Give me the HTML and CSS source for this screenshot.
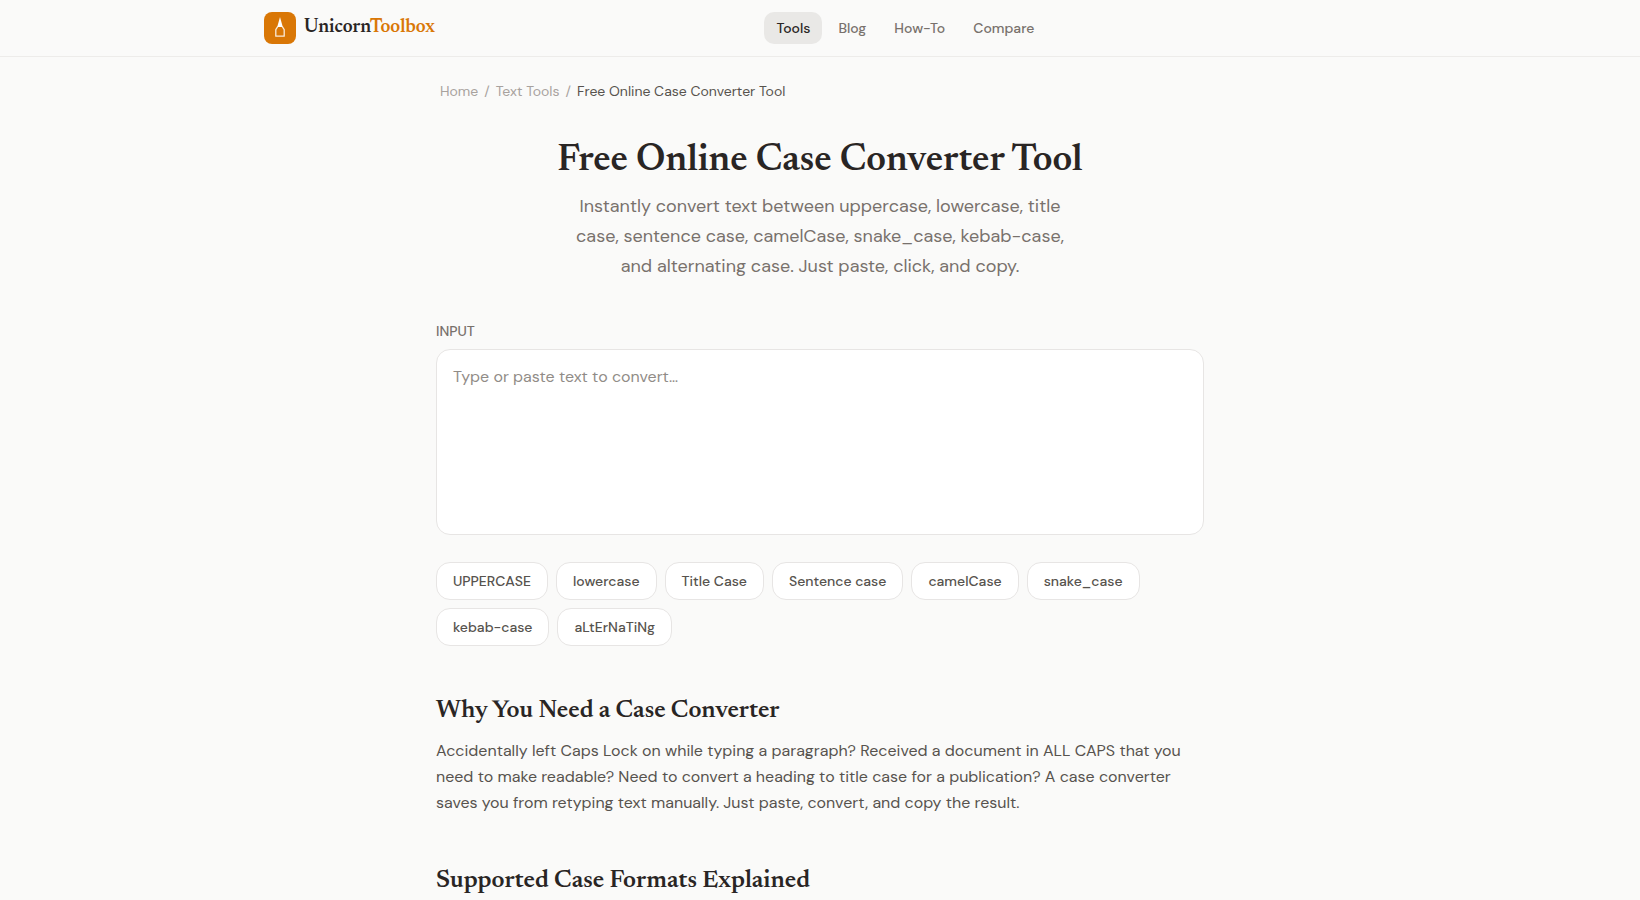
FILE: index.html
```html
<!DOCTYPE html>
<html lang="en">
	<head>
		<meta charset="UTF-8" />
		<meta name="viewport" content="width=device-width, initial-scale=1.0" />
		<title>Free Online Case Converter Tool</title>
		<link rel="stylesheet" href="styles.css">
	</head>
	<body>
		<header class="site-header">
			<div class="header-inner">
				<a class="logo" href="#">
					<svg class="logo-icon" viewBox="0 0 32 32" aria-hidden="true">
						<rect width="32" height="32" rx="8" fill="#d97706" />
						<path d="M16 5L18.8 15H13.2Z" fill="#fff" />
						<path d="M13.7 14.6L11.8 17.6V24.2H20.2V17.6L18.3 14.6" fill="none" stroke="#fff" stroke-opacity="0.85" stroke-width="1.3" stroke-linejoin="round" />
					</svg>
					<span>Unicorn<span class="logo-accent">Toolbox</span></span>
				</a>
				<nav class="main-nav">
					<a class="active" href="#">Tools</a>
					<a href="#">Blog</a>
					<a href="#">How-To</a>
					<a href="#">Compare</a>
				</nav>
				<div class="header-actions"></div>
			</div>
		</header>

		<main>
			<nav class="breadcrumb" aria-label="Breadcrumb">
				<a href="#">Home</a>
				<span>/</span>
				<a href="#">Text Tools</a>
				<span>/</span>
				<span class="current">Free Online Case Converter Tool</span>
			</nav>

			<div class="hero">
				<h1>Free Online Case Converter Tool</h1>
				<p>Instantly convert text between uppercase, lowercase, title case, sentence case, camelCase, snake_case, kebab-case, and alternating case. Just paste, click, and copy.</p>
			</div>

			<label for="caseInput">Input</label>
			<textarea id="caseInput" placeholder="Type or paste text to convert…"></textarea>

			<div class="case-buttons">
				<button type="button" data-case="upper">UPPERCASE</button>
				<button type="button" data-case="lower">lowercase</button>
				<button type="button" data-case="title">Title Case</button>
				<button type="button" data-case="sentence">Sentence case</button>
				<button type="button" data-case="camel">camelCase</button>
				<button type="button" data-case="snake">snake_case</button>
				<button type="button" data-case="kebab">kebab-case</button>
				<button type="button" data-case="alternating">aLtErNaTiNg</button>
			</div>

			<section>
				<h2>Why You Need a Case Converter</h2>
				<p>Accidentally left Caps Lock on while typing a paragraph? Received a document in ALL CAPS that you need to make readable? Need to convert a heading to title case for a publication? A case converter saves you from retyping text manually. Just paste, convert, and copy the result.</p>
			</section>

			<section>
				<h2>Supported Case Formats Explained</h2>
			</section>
		</main>
	</body>
</html>
```
FILE: styles.css
```css
* {
	box-sizing: border-box;
}
body {
	margin: 0;
	font-family: "DM Sans", "Noto Sans", sans-serif;
	font-size: 16px;
	line-height: 26px;
	color: #57534e;
	background-color: #fafaf9;
}
a {
	color: inherit;
	text-decoration: none;
}
h1,
h2,
.logo {
	font-family: Newsreader, "Liberation Serif", serif;
	font-weight: 600;
	color: #292524;
}

/* Header */
.site-header {
	border-bottom: 1px solid #edecea;
}
.header-inner {
	max-width: 1160px;
	height: 56px;
	margin: 0 auto;
	padding: 0 24px;
	display: flex;
	align-items: center;
	justify-content: space-between;
}
.logo {
	display: flex;
	align-items: center;
	gap: 8px;
	font-size: 19px;
	line-height: 28px;
}
.logo-icon {
	width: 32px;
	height: 32px;
}
.logo-accent {
	color: #d97706;
}
.main-nav {
	display: flex;
	gap: 4px;
}
.main-nav a {
	padding: 6px 12px;
	border-radius: 10px;
	font-size: 14px;
	line-height: 20px;
	font-weight: 500;
	color: #78716c;
}
.main-nav a.active {
	color: #292524;
	background-color: #e9e8e6;
}

/* Page */
main {
	max-width: 816px;
	margin: 0 auto;
	padding: 24px;
}
.breadcrumb {
	display: flex;
	gap: 6px;
	padding: 0 4px;
	font-size: 14px;
	line-height: 20px;
	color: #a8a29e;
}
.breadcrumb .current {
	color: #57534e;
}
.hero {
	margin: 36px 0 40px;
	text-align: center;
}
.hero h1 {
	margin: 0 0 6px;
	font-size: 38px;
	line-height: 48px;
}
.hero p {
	max-width: 520px;
	margin: 0 auto;
	font-size: 18px;
	line-height: 30px;
	color: #78716c;
}
label {
	display: block;
	margin-bottom: 8px;
	font-size: 14px;
	line-height: 20px;
	font-weight: 500;
	text-transform: uppercase;
	color: #78716c;
}
textarea {
	display: block;
	width: 100%;
	height: 186px;
	padding: 14px 16px;
	border: 1px solid #e7e5e4;
	border-radius: 14px;
	font: inherit;
	color: #292524;
	background-color: #fff;
	resize: none;
}
textarea::placeholder {
	color: #918c87;
}
.case-buttons {
	display: flex;
	flex-wrap: wrap;
	gap: 8px;
	margin-top: 27px;
}
button {
	padding: 8px 16px;
	border: 1px solid #e7e5e4;
	border-radius: 14px;
	font: inherit;
	font-size: 14px;
	line-height: 20px;
	font-weight: 500;
	color: #57534e;
	background-color: #fff;
	cursor: pointer;
}
button:hover {
	border-color: #d97706;
}
section {
	margin-top: 50px;
}
section h2 {
	margin: 0 0 10px;
	font-size: 25px;
	line-height: 32px;
}
section p {
	margin: 0;
}
```
